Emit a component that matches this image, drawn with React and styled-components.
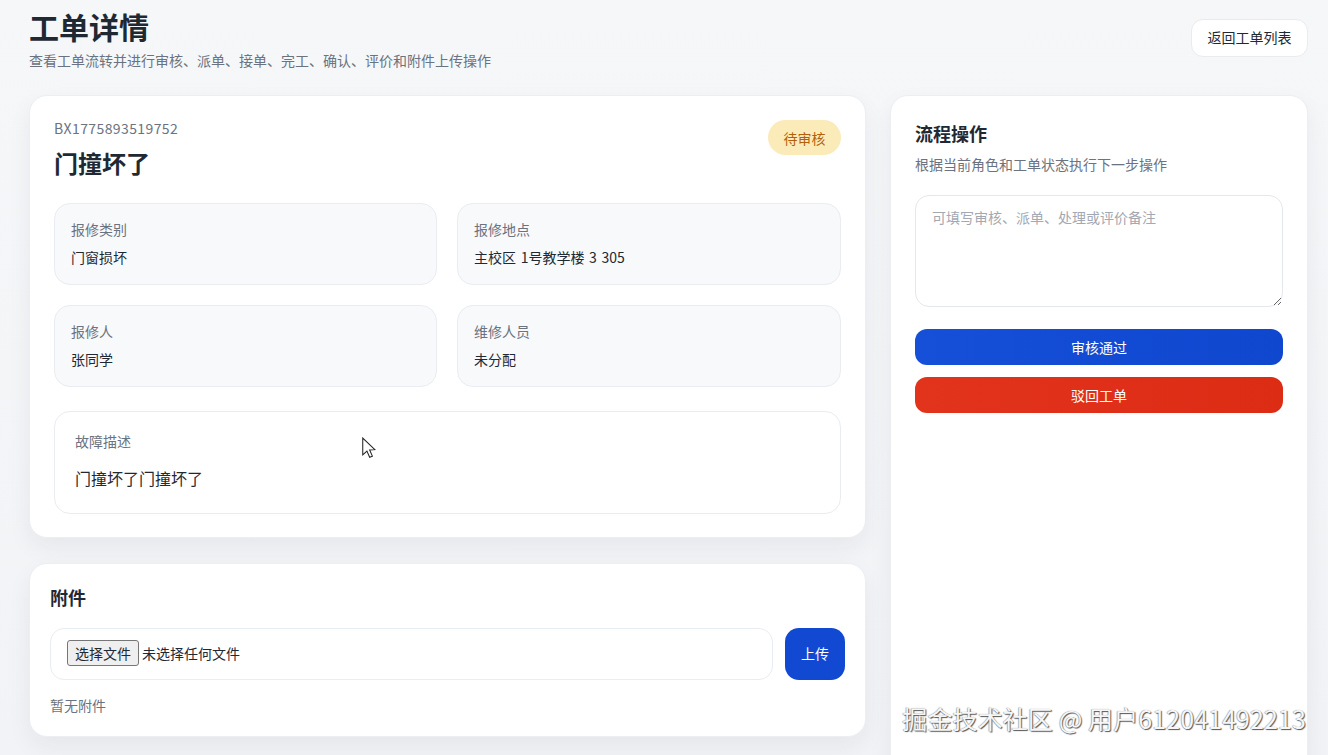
import styled, { createGlobalStyle } from 'styled-components'

const Global = createGlobalStyle`
  html, body {
    margin: 0;
    height: 100%;
    overflow: hidden;
    background: #f3f5f8;
    font-family: "Noto Sans CJK SC", "Noto Sans", sans-serif;
    color: #1f2933;
  }
  * { box-sizing: border-box; }
`

const Page = styled.div`
  position: relative;
  height: 755px;
  overflow: hidden;
  padding: 0 20px 0 29px;
  background: linear-gradient(180deg, #f5f7f9 0%, #f1f3f6 100%);
`

const Header = styled.header`
  height: 95px;
  display: flex;
  justify-content: space-between;
  align-items: flex-start;
`

const TitleBlock = styled.div`
  padding-top: 5px;
`

const PageTitle = styled.h1`
  margin: 0;
  font-size: 30px;
  line-height: 42px;
  font-weight: 700;
  color: #1f2933;
`

const PageSub = styled.p`
  margin: 3px 0 0;
  font-size: 14px;
  line-height: 20px;
  color: #6b7280;
`

const BackButton = styled.button`
  margin-top: 19px;
  width: 117px;
  height: 38px;
  padding: 0 0 2px;
  border: 1px solid #e8ebf0;
  border-radius: 12px;
  background: #fff;
  font: inherit;
  font-size: 14px;
  color: #1f2933;
`

const Columns = styled.div`
  display: grid;
  grid-template-columns: 837px 1fr;
  gap: 24px;
  align-items: start;
`

const Stack = styled.div`
  display: flex;
  flex-direction: column;
  gap: 25px;
`

const Card = styled.section`
  padding: ${(p) => p.$padding || '24px'};
  background: #fff;
  border: 1px solid #eceef2;
  border-radius: 18px;
  box-shadow: 0 10px 24px rgba(31, 41, 51, 0.06);
`

const SideCard = styled(Card)`
  height: 700px;
`

const TicketHead = styled.div`
  display: flex;
  justify-content: space-between;
  align-items: flex-start;
  margin-bottom: 23px;
`

const TicketNo = styled.div`
  margin-top: -2px;
  font-size: 14px;
  line-height: 20px;
  letter-spacing: 0.4px;
  color: #6b7280;
`

const TicketTitle = styled.h2`
  margin: 8px 0 0;
  font-size: 24px;
  line-height: 34px;
  font-weight: 700;
  color: #1f2933;
`

const Badge = styled.span`
  width: 73px;
  height: 35px;
  display: flex;
  align-items: center;
  justify-content: center;
  border-radius: 18px;
  background: #fbebb9;
  font-size: 14px;
  color: #b45f09;
`

const InfoGrid = styled.div`
  display: grid;
  grid-template-columns: 383px 1fr;
  gap: 20px;
`

const InfoBox = styled.div`
  height: 82px;
  padding: 15px 16px;
  background: #f8f9fb;
  border: 1px solid #e9ecf1;
  border-radius: 16px;
`

const InfoLabel = styled.div`
  font-size: 14px;
  line-height: 20px;
  color: #6b7280;
`

const InfoValue = styled.div`
  margin-top: 8px;
  font-size: 14px;
  line-height: 20px;
  word-spacing: 1.5px;
  color: #1f2933;
`

const DescBox = styled.div`
  margin-top: 24px;
  height: 103px;
  padding: 19px 20px;
  border: 1px solid #e9ecf1;
  border-radius: 16px;
`

const DescText = styled.div`
  margin-top: 15px;
  font-size: 16px;
  line-height: 24px;
  color: #1f2933;
`

const SectionTitle = styled.h3`
  margin: 0;
  font-size: 18px;
  line-height: 26px;
  font-weight: 700;
  color: #1f2933;
`

const UploadRow = styled.div`
  display: flex;
  gap: 12px;
  margin-top: 18px;
`

const FileBox = styled.div`
  flex: 1;
  height: 52px;
  display: flex;
  align-items: center;
  gap: 3px;
  padding: 0 16px 2px;
  border: 1px solid #e9ecf1;
  border-radius: 14px;
  font-size: 14px;
  color: #1f2933;
`

const FileButton = styled.span`
  width: 72px;
  height: 26px;
  display: flex;
  align-items: center;
  justify-content: center;
  background: #efefef;
  border: 1px solid #767676;
  border-radius: 3px;
`

const UploadButton = styled.button`
  width: 60px;
  height: 52px;
  padding: 0 0 2px;
  border: 0;
  border-radius: 14px;
  background: #1249d3;
  font: inherit;
  font-size: 14px;
  color: #fff;
`

const EmptyText = styled.p`
  margin: 14px 0 0;
  font-size: 14px;
  line-height: 22px;
  color: #6b7280;
`

const SideSub = styled.p`
  margin: 8px 0 0;
  font-size: 14px;
  line-height: 20px;
  color: #6b7280;
`

const Remark = styled.textarea`
  display: block;
  width: 100%;
  height: 112px;
  margin-top: 21px;
  padding: 11px 16px;
  border: 1px solid #e4e7ec;
  border-radius: 14px;
  background: #fff;
  font: inherit;
  font-size: 14px;
  line-height: 20px;
  outline: none;
  &::placeholder { color: #a3a8b1; }
`

const ActionList = styled.div`
  display: flex;
  flex-direction: column;
  gap: 12px;
  margin-top: 22px;
`

const ActionButton = styled.button`
  height: 36px;
  border: 0;
  border-radius: 12px;
  background: ${(p) => (p.$danger
    ? 'linear-gradient(90deg, #e2331d, #dd2c14)'
    : 'linear-gradient(90deg, #164fd8, #0f47cf)')};
  font: inherit;
  font-size: 14px;
  color: #fff;
`

const Pointer = styled.svg`
  position: absolute;
  left: 361px;
  top: 437px;
`

const Watermark = styled.div`
  position: absolute;
  right: 22px;
  top: 701px;
  font-size: 25px;
  line-height: 34px;
  letter-spacing: 0.1px;
  white-space: nowrap;
  color: #f6f6f6;
  text-shadow: 1px 1px 1px #555, -0.5px 0 1px #888;
`

const info = [
  ['报修类别', '门窗损坏'],
  ['报修地点', '主校区 1号教学楼 3 305'],
  ['报修人', '张同学'],
  ['维修人员', '未分配'],
]

export default function App() {
  return (
    <Page>
      <Global />
      <Header>
        <TitleBlock>
          <PageTitle>工单详情</PageTitle>
          <PageSub>查看工单流转并进行审核、派单、接单、完工、确认、评价和附件上传操作</PageSub>
        </TitleBlock>
        <BackButton>返回工单列表</BackButton>
      </Header>
      <Columns>
        <Stack>
          <Card $padding='24px 24px 23px'>
            <TicketHead>
              <div>
                <TicketNo>BX1775893519752</TicketNo>
                <TicketTitle>门撞坏了</TicketTitle>
              </div>
              <Badge>待审核</Badge>
            </TicketHead>
            <InfoGrid>
              {info.map(([label, value]) => (
                <InfoBox key={label}>
                  <InfoLabel>{label}</InfoLabel>
                  <InfoValue>{value}</InfoValue>
                </InfoBox>
              ))}
            </InfoGrid>
            <DescBox>
              <InfoLabel>故障描述</InfoLabel>
              <DescText>门撞坏了门撞坏了</DescText>
            </DescBox>
          </Card>
          <Card $padding='20px'>
            <SectionTitle>附件</SectionTitle>
            <UploadRow>
              <FileBox>
                <FileButton>选择文件</FileButton>
                未选择任何文件
              </FileBox>
              <UploadButton>上传</UploadButton>
            </UploadRow>
            <EmptyText>暂无附件</EmptyText>
          </Card>
        </Stack>
        <SideCard>
          <SectionTitle>流程操作</SectionTitle>
          <SideSub>根据当前角色和工单状态执行下一步操作</SideSub>
          <Remark placeholder='可填写审核、派单、处理或评价备注' />
          <ActionList>
            <ActionButton>审核通过</ActionButton>
            <ActionButton $danger>驳回工单</ActionButton>
          </ActionList>
        </SideCard>
      </Columns>
      <Pointer width='15' height='23' viewBox='0 0 14 22'>
        <path d='M1.5 1v16l4-3.6 2.6 6 2.6-1.1-2.6-5.8 5-.4z' fill='#fff' stroke='#222' strokeWidth='1' />
      </Pointer>
      <Watermark>掘金技术社区 @ 用户612041492213</Watermark>
    </Page>
  )
}
